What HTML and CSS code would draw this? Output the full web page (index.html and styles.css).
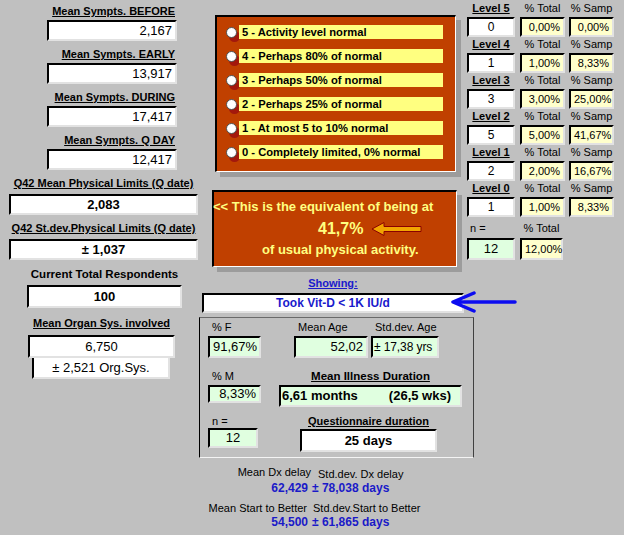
FILE: index.html
```html
<!doctype html><html lang="en"><head>
<meta charset="utf-8" />
<meta name="viewport" content="width=device-width" />
<title>Physical activity level</title>
<link rel="stylesheet" href="styles.css"></head><body>
<div class="page">
<div class="col-l">
	<div class="sym">
		<div class="lbl u b">Mean Sympts. BEFORE</div>
		<div class="box tr">2,167</div>
	</div>
	<div class="sym">
		<div class="lbl u b">Mean Sympts. EARLY</div>
		<div class="box tr">13,917</div>
	</div>
	<div class="sym">
		<div class="lbl u b">Mean Sympts. DURING</div>
		<div class="box tr">17,417</div>
	</div>
	<div class="sym">
		<div class="lbl u b">Mean Sympts. Q DAY</div>
		<div class="box tr">12,417</div>
	</div>
	<div class="wide first">
		<div class="lbl u b">Q42 Mean Physical Limits (Q date)</div>
		<div class="box b tc">2,083</div>
	</div>
	<div class="wide">
		<div class="lbl u b">Q42 St.dev.Physical Limits (Q date)</div>
		<div class="box b tc">± 1,037</div>
	</div>
	<div class="resp">
		<div class="lbl b tc">Current Total Respondents</div>
		<div class="box b tc">100</div>
	</div>
	<div class="organ">
		<div class="lbl u b tc">Mean Organ Sys. involved</div>
		<div class="box tc">6,750</div>
		<div class="box sub tc">± 2,521 Org.Sys.</div>
	</div>
</div>
<div class="col-m">
	<div class="opts">
		<div class="opt"><i class="radio"></i><span>5 - Activity level normal</span></div>
		<div class="opt"><i class="radio"></i><span>4 - Perhaps 80% of normal</span></div>
		<div class="opt"><i class="radio"></i><span>3 - Perhaps 50% of normal</span></div>
		<div class="opt"><i class="radio"></i><span>2 - Perhaps 25% of normal</span></div>
		<div class="opt"><i class="radio"></i><span>1 - At most 5 to 10% normal</span></div>
		<div class="opt"><i class="radio"></i><span>0 - Completely limited, 0% normal</span></div>
	</div>
	<div class="result">
		<div class="l1">&lt;&lt; This is the equivalent of being at</div>
		<div class="l2"><span class="pct">41,7%</span>
			<svg width="52" height="16" viewBox="0 0 52 16"><polygon points="1,8 13,1.5 13,5.5 50,5.5 50,10.5 13,10.5 13,14.5" fill="#f2a400" stroke="#8a0000" stroke-width="1" stroke-linejoin="round"/></svg>
		</div>
		<div class="l3">of usual physical activity.</div>
	</div>
	<div class="showing">
		<div class="lbl u b tc">Showing:</div>
		<div class="box b tc">Took Vit-D &lt; 1K IU/d</div>
		<svg class="pointer" width="66" height="22" viewBox="0 0 66 22"><path d="M2 11H64M23 2L2 11L23 20" fill="none" stroke="#0c0cf0" stroke-width="3.5" stroke-linecap="round" stroke-linejoin="round"/></svg>
	</div>
	<div class="stats">
		<div class="srow">
			<div class="c-f"><div class="slbl">% F</div><div class="box green tr h22">91,67%</div></div>
			<div class="c-age"><div class="slbl">Mean Age</div><div class="box green tr h22">52,02</div></div>
			<div class="c-sd"><div class="slbl">Std.dev. Age</div><div class="box green sd h22">± 17,38 yrs</div></div>
		</div>
		<div class="srow mid">
			<div class="c-f"><div class="slbl">% M</div><div class="box green tr h18">8,33%</div></div>
			<div class="c-ill"><div class="slbl u b tc">Mean Illness Duration</div><div class="box green ill b h22"><span>6,61 months</span><span>(26,5 wks)</span></div></div>
		</div>
		<div class="srow last">
			<div class="c-n"><div class="slbl">n =</div><div class="box green tc h20">12</div></div>
			<div class="c-q"><div class="slbl u b tc">Questionnaire duration</div><div class="box b tc h23">25 days</div></div>
		</div>
	</div>
	<div class="delay">
		<div class="dl d1">Mean Dx delay</div><div class="dl d2">Std.dev. Dx delay</div>
		<div class="dv v1">62,429</div><div class="dv">± 78,038 days</div>
		<div class="dl d3">Mean Start to Better</div><div class="dl d4">Std.dev.Start to Better</div>
		<div class="dv v1">54,500</div><div class="dv">± 61,865 days</div>
	</div>
</div>
<div class="col-r">
	<div class="lvl">
		<div class="lrow"><span class="w1 u b">Level 5</span><span class="w2">% Total</span><span class="w3">% Samp</span></div>
		<div class="brow"><div class="box num w1 tc">0</div><div class="box yel w2 tr">0,00%</div><div class="box yel w3 tr">0,00%</div></div>
	</div>
	<div class="lvl">
		<div class="lrow"><span class="w1 u b">Level 4</span><span class="w2">% Total</span><span class="w3">% Samp</span></div>
		<div class="brow"><div class="box num w1 tc">1</div><div class="box yel w2 tr">1,00%</div><div class="box yel w3 tr">8,33%</div></div>
	</div>
	<div class="lvl">
		<div class="lrow"><span class="w1 u b">Level 3</span><span class="w2">% Total</span><span class="w3">% Samp</span></div>
		<div class="brow"><div class="box num w1 tc">3</div><div class="box yel w2 tr">3,00%</div><div class="box yel w3 tr">25,00%</div></div>
	</div>
	<div class="lvl">
		<div class="lrow"><span class="w1 u b">Level 2</span><span class="w2">% Total</span><span class="w3">% Samp</span></div>
		<div class="brow"><div class="box num w1 tc">5</div><div class="box yel w2 tr">5,00%</div><div class="box yel w3 tr">41,67%</div></div>
	</div>
	<div class="lvl">
		<div class="lrow"><span class="w1 u b">Level 1</span><span class="w2">% Total</span><span class="w3">% Samp</span></div>
		<div class="brow"><div class="box num w1 tc">2</div><div class="box yel w2 tr">2,00%</div><div class="box yel w3 tr">16,67%</div></div>
	</div>
	<div class="lvl">
		<div class="lrow"><span class="w1 u b">Level 0</span><span class="w2">% Total</span><span class="w3">% Samp</span></div>
		<div class="brow"><div class="box num w1 tc">1</div><div class="box yel w2 tr">1,00%</div><div class="box yel w3 tr">8,33%</div></div>
	</div>
	<div class="lvl tot">
		<div class="lrow"><span class="w1 nlbl">n =</span><span class="w2">% Total</span></div>
		<div class="brow"><div class="box green num w1 tc h22">12</div><div class="box yel w2 h22">12,00%</div></div>
	</div>
</div>
</div>
</body></html>
```

FILE: styles.css
```css
*{ box-sizing: border-box }
body{ margin: 0; background: #c0c0c0; color: #000; font: 11px/13px "Liberation Sans", Arial, sans-serif }
.page{ display: flex; align-items: flex-start; height: 535px; overflow: hidden }
.u{ text-decoration: underline }
.b{ font-weight: bold }
.tc{ text-align: center }
.tr{ text-align: right }
.lbl{ white-space: nowrap }
.box{ background: #fff; border: 2px solid; border-color: #000 #e2e2e2 #e2e2e2 #000; height: 21px; font-size: 13px; line-height: 17px; padding: 0 3px; white-space: nowrap }
.green{ background: #e0ffe0 }
.yel{ background: #ffffcc }
.h18{ height: 18px; line-height: 14px }
.h20{ height: 20px; line-height: 16px }
.h22{ height: 22px; line-height: 18px }
.h23{ height: 23px; line-height: 19px }

/* left column */
.col-l{ width: 199px; flex: none; padding-top: 5px }
.sym{ width: 177px; margin-bottom: 7px }
.sym .lbl{ text-align: right; padding-right: 2px; margin-bottom: 2px }
.sym .box{ margin-left: 47px }
.wide{ margin-left: 9px; width: 189px }
.wide.first{ margin-top: 3px }
.wide .lbl{ text-align: center; margin-bottom: 4px }
.wide .box{ margin-bottom: 7px }
.resp{ margin-left: 27px; width: 155px }
.resp .lbl{ font-size: 11.5px; line-height: 14px; margin-bottom: 4px }
.resp .box{ height: 23px; line-height: 19px }
.organ{ margin: 9px 0 0 28px; width: 147px }
.organ .lbl{ margin-bottom: 5px }
.organ .box{ height: 23px; line-height: 19px }
.organ .sub{ margin-left: 4px; width: 138px; height: 21px; border-top: 0 }

/* middle column */
.col-m{ width: 266px; flex: none }
.opts, .result{ background: #c04000; border: solid; border-width: 2px 1px 1px 2px; border-color: #000 #fff #fff #000; box-shadow: 5px 5px 0 #9c9c9c }
.opts{ margin: 15px 0 0 16px; width: 241px; height: 157px; padding: 8px 0 0 9px }
.opt{ display: flex; align-items: center; height: 14px; margin-bottom: 10px }
.radio{ flex: none; width: 11px; height: 11px; margin-right: 2px; border-radius: 50%; background: #fff; border: 1px solid #505050; box-shadow: 3px 4px 0 #a3180c }
.opt span{ width: 204px; height: 14px; padding-left: 3px; background: #ffff80; font-weight: bold; font-size: 11.2px; line-height: 14px; white-space: nowrap }
.result{ margin: 18px 0 0 13px; width: 245px; height: 77px; padding-top: 7px; color: #ffff80; font-weight: bold; font-size: 13px; line-height: 15px; white-space: nowrap }
.l1{ margin-left: -1px }
.l2{ display: flex; align-items: center; height: 18px; margin: 6px 0 0 104px }
.l2 .pct{ font-size: 16px; line-height: 18px }
.l2 svg{ margin-left: 8px }
.l3{ margin-top: 4px; padding-left: 48px }
.showing{ position: relative; margin: 10px 0 0 3px; width: 262px; color: #1a1acc }
.showing .lbl{ margin-bottom: 3px }
.showing .box{ height: 20px; font-size: 12px; line-height: 16px }
.pointer{ position: absolute; left: 249px; top: 14px }
.stats{ margin-top: 4px; width: 275px; height: 141px; padding-top: 3px; border: 1px solid; border-color: #6a6a6a #404040 #f4f4f4 #000 }
.srow{ display: flex; align-items: flex-start }
.srow.mid{ margin-top: 12px }
.srow.last{ margin-top: 8px }
.slbl{ padding-left: 4px; margin-bottom: 2px; white-space: nowrap }
.srow.last .slbl{ margin-bottom: 0 }
.c-f{ margin-left: 8px; width: 53px }
.c-age{ margin-left: 33px; width: 74px }
.c-sd{ margin-left: 3px; width: 68px }
.c-ill{ margin-left: 18px; width: 183px }
.c-ill .slbl{ font-size: 11.5px; padding-left: 0 }
.c-n{ margin-left: 8px; width: 50px }
.c-q{ margin-left: 42px; width: 137px }
.c-q .slbl{ padding-left: 0 }
.c-q .box{ margin-top: 1px }
.sd{ padding: 0 0 0 1px; font-size: 12px; letter-spacing: -0.1px }
.ill{ display: flex; justify-content: space-between; padding: 0 9px 0 1px }
.delay{ display: grid; grid-template-columns: 113px auto; margin-top: 8px; white-space: nowrap }
.dl{ line-height: 13px }
.d1{ text-align: right; padding-right: 1px }
.d2{ padding: 2px 0 0 6px }
.d3{ text-align: right; padding-right: 5px; margin-top: 7px }
.d4{ padding-left: 1px; margin-top: 7px }
.dv{ color: #1a1ac8; font-weight: bold; font-size: 12px; line-height: 14px }
.v1{ text-align: right; padding-right: 4px }

/* right column */
.col-r{ flex: 1; padding: 2px 0 0 2px }
.lvl{ margin-bottom: 1px }
.lrow{ display: flex; height: 13px; margin-bottom: 2px; white-space: nowrap }
.lrow span{ text-align: center }
.brow{ display: flex }
.w1{ width: 48px; flex: none }
.w2{ width: 45px; margin-left: 5px; flex: none }
.w3{ width: 45px; margin-left: 4px; flex: none }
.brow .box{ height: 20px; font-size: 11px; line-height: 16px }
.brow .num{ font-size: 12px }
.tot{ margin-top: 5px }
.tot .lrow{ margin-bottom: 3px }
.tot .nlbl{ text-align: left; padding-left: 3px }
.tot .w2{ width: 43px }
.brow .h22{ height: 22px; line-height: 18px }
.tot .box.num{ font-size: 13px }
```
